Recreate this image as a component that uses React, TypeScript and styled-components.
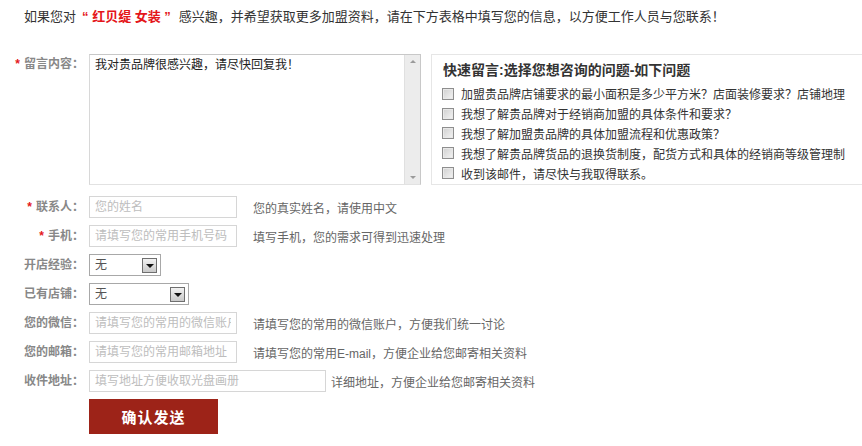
import styled, { createGlobalStyle } from "styled-components";

const GlobalStyle = createGlobalStyle`
  html, body {
    margin: 0;
    padding: 0;
    background: #fff;
    overflow: hidden;
  }
  body {
    font-family: "Liberation Sans", "Noto Sans CJK SC", sans-serif;
    color: #333;
  }
`;

const Page = styled.div`
  width: 862px;
  height: 446px;
  overflow: hidden;
  padding-top: 7px;
  box-sizing: border-box;
`;

const Intro = styled.p`
  margin: 0 0 0 24px;
  font-size: 13px;
  line-height: 20px;
  color: #333;
  white-space: nowrap;
`;

const Brand = styled.b`
  color: #e4161a;
  margin: 0 8px 0 6px;
`;

const Form = styled.form`
  margin-top: 27px;
  display: flex;
  flex-direction: column;
`;

const MessageRow = styled.div`
  display: flex;
  align-items: flex-start;
`;

const Label = styled.label`
  flex: none;
  width: 84px;
  margin-right: 5px;
  text-align: right;
  font-size: 12px;
  font-weight: bold;
  line-height: 20px;
  color: #888;
  white-space: nowrap;
`;

const Star = styled.span`
  color: #e4161a;
  margin-right: 4px;
`;

const TextareaWrap = styled.div`
  flex: none;
  display: flex;
  width: 332px;
  height: 131px;
  box-sizing: border-box;
  border: 1px solid #c8c8c8;
  border-left-color: #d8d8d8;
  border-bottom-color: #e2e2e2;
`;

const Textarea = styled.textarea`
  flex: 1;
  border: none;
  outline: none;
  resize: none;
  overflow: hidden;
  padding: 1px 5px;
  margin: 0;
  font-family: inherit;
  font-size: 12px;
  line-height: 18px;
  color: #222;
`;

const Scrollbar = styled.div`
  flex: none;
  width: 16px;
  background: #ececec;
  border-left: 1px solid #e0e0e0;
  display: flex;
  flex-direction: column;
  justify-content: space-between;
  align-items: center;
  padding: 5px 0;
  box-sizing: border-box;
`;

const ScrollArrow = styled.span<{ $down?: boolean }>`
  width: 0;
  height: 0;
  border-left: 3px solid transparent;
  border-right: 3px solid transparent;
  ${(p) =>
    p.$down
      ? "border-top: 3px solid #9a9a9a;"
      : "border-bottom: 3px solid #9a9a9a;"}
`;

const QuickPanel = styled.div`
  flex: none;
  width: 460px;
  height: 131px;
  margin-left: 10px;
  box-sizing: border-box;
  border: 1px solid #e6e6e6;
  padding: 5px 0 0 10px;
`;

const QuickTitle = styled.div`
  font-size: 14px;
  font-weight: bold;
  line-height: 20px;
  color: #333;
  padding-left: 1px;
  margin-bottom: 4px;
  white-space: nowrap;
`;

const QuickItem = styled.label`
  display: flex;
  align-items: center;
  height: 19.8px;
  font-size: 12px;
  color: #333;
  white-space: nowrap;
`;

const Check = styled.input.attrs({ type: "checkbox" })`
  appearance: none;
  flex: none;
  width: 12px;
  height: 12px;
  margin: 0 7px 0 0;
  box-sizing: border-box;
  border: 1px solid #8e8e8e;
  background: linear-gradient(135deg, #cfcfcf, #f4f4f4);
  box-shadow: inset 0 0 0 1px #e8e8e8;
`;

const Fields = styled.div`
  display: flex;
  flex-direction: column;
  gap: 7px;
  margin-top: 11px;
`;

const FieldRow = styled.div`
  display: flex;
  align-items: center;
  height: 22px;
`;

const TextInput = styled.input<{ $w?: number }>`
  flex: none;
  width: ${(p) => p.$w ?? 148}px;
  height: 22px;
  box-sizing: border-box;
  border: 1px solid #d6d6d6;
  padding: 0 5px;
  margin: 0;
  font-family: inherit;
  font-size: 12px;
  color: #333;
  outline: none;
  &::placeholder {
    color: #bdbdbd;
  }
`;

const Hint = styled.span<{ $gap?: number }>`
  margin-left: ${(p) => p.$gap ?? 16}px;
  font-size: 12px;
  color: #666;
  white-space: nowrap;
`;

const SelectBox = styled.div<{ $w: number }>`
  flex: none;
  display: flex;
  align-items: center;
  width: ${(p) => p.$w}px;
  height: 22px;
  box-sizing: border-box;
  border: 1px solid #a8a8a8;
  padding-right: 3px;
`;

const Select = styled.select`
  flex: 1;
  min-width: 0;
  appearance: none;
  border: none;
  outline: none;
  background: transparent;
  padding: 0 5px;
  margin: 0;
  font-family: inherit;
  font-size: 12px;
  color: #555;
`;

const DropButton = styled.span`
  flex: none;
  width: 15px;
  height: 15px;
  box-sizing: border-box;
  border: 1px solid #6f6f6f;
  background: linear-gradient(#f2f2f2, #c9c9c9);
  display: flex;
  align-items: center;
  justify-content: center;
  &::after {
    content: "";
    border-left: 4px solid transparent;
    border-right: 4px solid transparent;
    border-top: 4px solid #111;
    margin-top: 1px;
  }
`;

const ButtonRow = styled.div`
  display: flex;
  margin-top: 7px;
  padding-left: 89px;
`;

const Submit = styled.button`
  width: 129px;
  height: 35px;
  border: none;
  margin: 0;
  background: #9d2318;
  color: #fff;
  font-family: inherit;
  font-size: 15px;
  font-weight: bold;
  letter-spacing: 1px;
  cursor: pointer;
`;

const quickItems = [
  "加盟贵品牌店铺要求的最小面积是多少平方米？店面装修要求？店铺地理",
  "我想了解贵品牌对于经销商加盟的具体条件和要求？",
  "我想了解加盟贵品牌的具体加盟流程和优惠政策？",
  "我想了解贵品牌货品的退换货制度，配货方式和具体的经销商等级管理制",
  "收到该邮件，请尽快与我取得联系。",
];

export default function App() {
  return (
    <>
      <GlobalStyle />
      <Page>
        <Intro>
          如果您对<Brand>“ 红贝缇 女装 ”</Brand>感兴趣，并希望获取更多加盟资料，请在下方表格中填写您的信息，以方便工作人员与您联系！
        </Intro>
        <Form onSubmit={(e) => e.preventDefault()}>
          <MessageRow>
            <Label>
              <Star>*</Star>留言内容：
            </Label>
            <TextareaWrap>
              <Textarea defaultValue="我对贵品牌很感兴趣，请尽快回复我！" />
              <Scrollbar>
                <ScrollArrow />
                <ScrollArrow $down />
              </Scrollbar>
            </TextareaWrap>
            <QuickPanel>
              <QuickTitle>快速留言:选择您想咨询的问题-如下问题</QuickTitle>
              {quickItems.map((q) => (
                <QuickItem key={q}>
                  <Check />
                  {q}
                </QuickItem>
              ))}
            </QuickPanel>
          </MessageRow>
          <Fields>
            <FieldRow>
              <Label>
                <Star>*</Star>联系人：
              </Label>
              <TextInput placeholder="您的姓名" />
              <Hint>您的真实姓名，请使用中文</Hint>
            </FieldRow>
            <FieldRow>
              <Label>
                <Star>*</Star>手机：
              </Label>
              <TextInput placeholder="请填写您的常用手机号码" />
              <Hint>填写手机，您的需求可得到迅速处理</Hint>
            </FieldRow>
            <FieldRow>
              <Label>开店经验：</Label>
              <SelectBox $w={72}>
                <Select defaultValue="无">
                  <option>无</option>
                  <option>1年以下</option>
                  <option>1-3年</option>
                  <option>3年以上</option>
                </Select>
                <DropButton />
              </SelectBox>
            </FieldRow>
            <FieldRow>
              <Label>已有店铺：</Label>
              <SelectBox $w={100}>
                <Select defaultValue="无">
                  <option>无</option>
                  <option>有</option>
                </Select>
                <DropButton />
              </SelectBox>
            </FieldRow>
            <FieldRow>
              <Label>您的微信：</Label>
              <TextInput placeholder="请填写您的常用的微信账户" />
              <Hint>请填写您的常用的微信账户，方便我们统一讨论</Hint>
            </FieldRow>
            <FieldRow>
              <Label>您的邮箱：</Label>
              <TextInput placeholder="请填写您的常用邮箱地址" />
              <Hint>请填写您的常用E-mail，方便企业给您邮寄相关资料</Hint>
            </FieldRow>
            <FieldRow>
              <Label>收件地址：</Label>
              <TextInput $w={237} placeholder="填写地址方便收取光盘画册" />
              <Hint $gap={5}>详细地址，方便企业给您邮寄相关资料</Hint>
            </FieldRow>
          </Fields>
          <ButtonRow>
            <Submit type="submit">确认发送</Submit>
          </ButtonRow>
        </Form>
      </Page>
    </>
  );
}
